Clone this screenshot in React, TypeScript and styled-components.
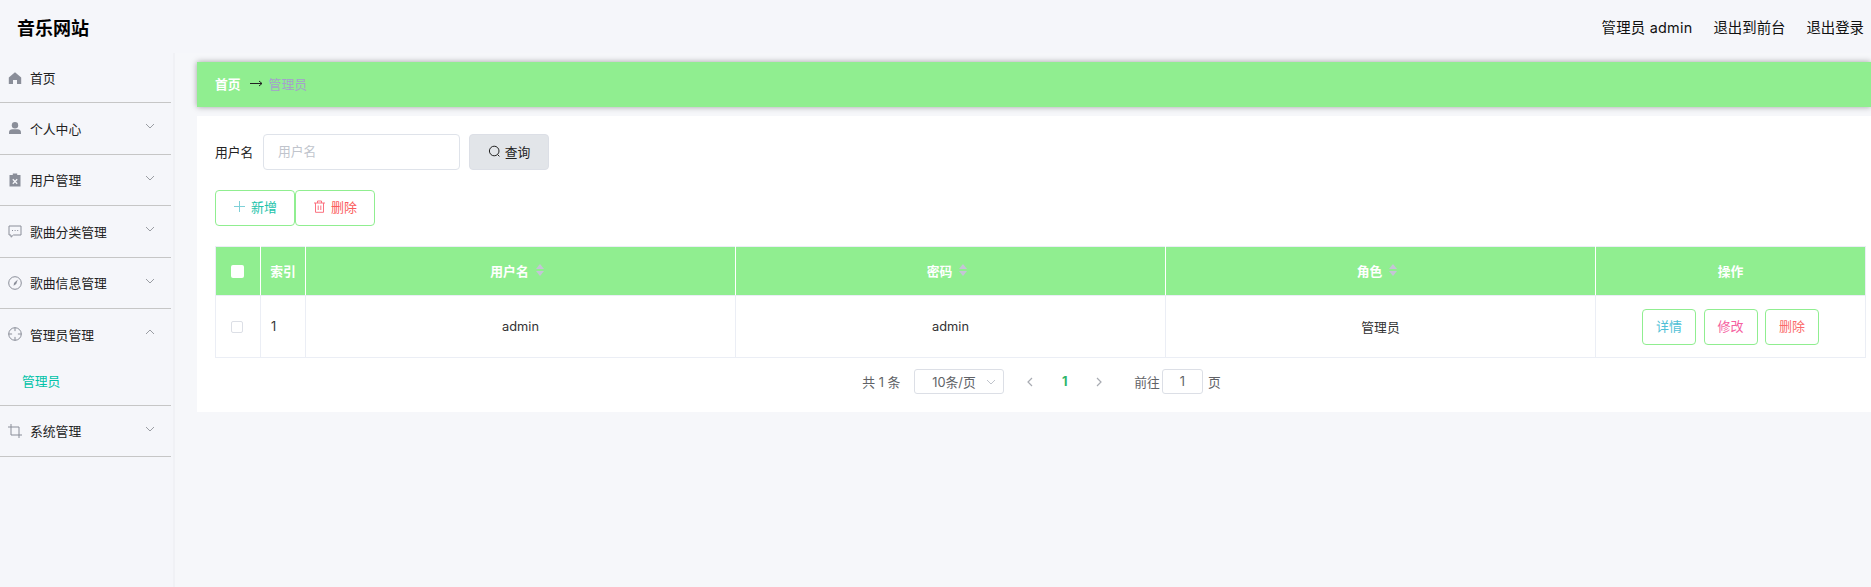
import React from "react";
import styled, { createGlobalStyle } from "styled-components";

const FONT = `Inter, "Noto Sans CJK SC", "Noto Sans", sans-serif`;

const Global = createGlobalStyle`
  html, body { margin: 0; padding: 0; height: 100%; overflow: hidden; background: #f6f7fa; }
  #root { height: 100%; }
  * { box-sizing: border-box; }
  body { font-family: ${FONT}; font-size: 12.8px; color: #303133; }
`;

const Page = styled.div`
  width: 1871px;
  height: 587px;
  display: flex;
  flex-direction: column;
  overflow: hidden;
`;
const TopBar = styled.header`
  height: 53px;
  flex: none;
  display: flex;
  align-items: center;
  justify-content: space-between;
  padding: 0 7px 0 17px;
  background: #f5f6fa;
`;
const Brand = styled.div`
  font-size: 18px;
  font-weight: 700;
  color: #000;
`;
const TopLinks = styled.nav`
  display: flex;
  gap: 21px;
  font-size: 14.4px;
  color: #111;
`;
const AdminName = styled.span`
  letter-spacing: 0.25px;
`;
const Body = styled.div`
  flex: 1;
  display: flex;
  min-height: 0;
`;
const Sidebar = styled.aside`
  width: 175px;
  flex: none;
  padding-right: 2px;
  background: #f5f6fa;
  border-right: 2px solid #f0f1f5;
`;
const MenuGroup = styled.div`
  border-bottom: 1px solid #c6c6c6;
`;
const MenuTitle = styled.div<{ $first?: boolean }>`
  height: ${(p) => (p.$first ? 49 : 50.5)}px;
  display: flex;
  align-items: center;
  padding-left: 8px;
  gap: 8px;
  color: #222;
`;
const MenuIcon = styled.svg`
  width: 14px;
  height: 14px;
  flex: none;
  color: #8a8e99;
`;
const MenuLabel = styled.span`
  flex: 1;
`;
const Chevron = styled.svg`
  width: 10px;
  height: 10px;
  margin-right: 16px;
  margin-top: -4px;
  color: #909399;
`;
const SubItem = styled.div`
  height: 45px;
  display: flex;
  align-items: flex-start;
  padding: 11px 0 0 22px;
  color: #00c2a8;
`;
const Main = styled.main`
  flex: 1;
  min-width: 0;
  padding: 9px 0 0 22px;
`;
const Crumbs = styled.div`
  height: 45px;
  display: flex;
  align-items: center;
  padding: 0 0 2px 18px;
  background: #90ee90;
  box-shadow: 0 0 6px rgba(0, 0, 0, 0.35);
`;
const CrumbHome = styled.span`
  color: #fff;
  font-weight: 700;
`;
const CrumbArrow = styled.span`
  width: 13px;
  height: 9px;
  margin: 0 6px 0 9px;
  color: #222;
  display: flex;
`;
const CrumbNow = styled.span`
  color: #a5a0cc;
`;
const Panel = styled.section`
  margin-top: 9px;
  height: 296px;
  background: #fff;
  padding: 18px 5px 0 18px;
`;
const FilterRow = styled.div`
  display: flex;
  align-items: center;
  height: 36px;
`;
const FieldLabel = styled.label`
  width: 48px;
  padding-bottom: 1px;
  color: #222;
`;
const TextInput = styled.input`
  width: 197px;
  height: 36px;
  border: 1px solid #dfe3ea;
  border-radius: 4px;
  padding: 0 14px 2px;
  font: inherit;
  background: #fff;
  &::placeholder {
    color: #c0c4cc;
  }
`;
const SearchButton = styled.button`
  margin-left: 9px;
  width: 80px;
  height: 36px;
  display: flex;
  align-items: center;
  justify-content: center;
  gap: 4px;
  padding: 0 0 2px;
  border: 1px solid #dcdfe6;
  border-radius: 4px;
  background: #e2e5e9;
  color: #222;
  font: inherit;
`;
const Toolbar = styled.div`
  display: flex;
  margin-top: 20px;
`;
const GreenButton = styled.button<{ $color: string; $w?: number }>`
  width: ${(p) => p.$w ?? 80}px;
  height: 36px;
  display: flex;
  align-items: center;
  justify-content: center;
  gap: 5px;
  padding: 0 0 3px;
  background: #fff;
  border: 1px solid #90ee90;
  border-radius: 4px;
  color: ${(p) => p.$color};
  font: inherit;
  font-size: 13px;
`;
const BtnIcon = styled.svg`
  width: 13px;
  height: 13px;
  flex: none;
`;
const Grid = styled.table`
  margin-top: 20px;
  width: 1651px;
  table-layout: fixed;
  border-collapse: collapse;
  border: 1px solid #ebeef5;
`;
const HeadCell = styled.th<{ $w?: number }>`
  width: ${(p) => (p.$w ? `${p.$w}px` : "auto")};
  height: 49px;
  padding: 0 0 2px;
  background: #90ee90;
  color: #fff;
  font-weight: 700;
  font-size: 12.8px;
  text-align: center;
  border-right: 1px solid #fff;
  border-bottom: 1px solid #ebeef5;
  &:last-child {
    border-right: 0;
  }
`;
const HeadInner = styled.span`
  display: inline-flex;
  align-items: center;
  gap: 7px;
  padding-right: 7px;
`;
const Sort = styled.span`
  display: inline-flex;
  flex-direction: column;
  gap: 2px;
`;
const Caret = styled.i<{ $up?: boolean }>`
  width: 0;
  height: 0;
  border-left: 4px solid transparent;
  border-right: 4px solid transparent;
  ${(p) => (p.$up ? "border-bottom: 5px solid #c4c4d6;" : "border-top: 5px solid #c4c4d6;")}
`;
const Cell = styled.td<{ $left?: boolean }>`
  height: 62px;
  padding: 0 0 0 ${(p) => (p.$left ? 10 : 0)}px;
  text-align: ${(p) => (p.$left ? "left" : "center")};
  border-right: 1px solid #ebeef5;
  color: #333;
`;
const HeadCheck = styled.span`
  display: block;
  width: 13px;
  height: 13px;
  margin: 2px 0 0 15px;
  background: #fff;
  border-radius: 2px;
`;
const RowCheck = styled.span`
  display: block;
  width: 12px;
  height: 12px;
  margin: 0 0 0 15px;
  background: #fff;
  border: 1px solid #dcdfe6;
  border-radius: 2px;
`;
const Actions = styled.div`
  display: flex;
  justify-content: center;
  gap: 7.6px;
`;
const Pager = styled.div`
  display: flex;
  align-items: center;
  justify-content: center;
  height: 25px;
  margin-top: 11px;
  padding-left: 2px;
  color: #606266;
`;
const PageSize = styled.div`
  width: 90px;
  height: 25px;
  margin: 0 0 0 14px;
  padding: 0 7px 0 17px;
  display: flex;
  align-items: center;
  justify-content: space-between;
  border: 1px solid #dcdfe6;
  border-radius: 3px;
`;
const PagerNav = styled.svg`
  width: 10px;
  height: 10px;
  color: #a8abb2;
`;
const PagerChevron = styled.svg`
  width: 10px;
  height: 10px;
  color: #c0c4cc;
`;
const PagerPrev = styled.span`
  margin-left: 21px;
  display: flex;
`;
const PagerCurrent = styled.span`
  width: 59px;
  text-align: center;
  font-weight: 700;
  color: #2fb56a;
`;
const PagerGoto = styled.span`
  margin-left: 30px;
`;
const PagerInput = styled.div`
  width: 41px;
  height: 25px;
  margin: 0 5px 0 2px;
  display: flex;
  align-items: center;
  justify-content: center;
  border: 1px solid #dcdfe6;
  border-radius: 3px;
`;

const Down = () => (
  <Chevron viewBox="0 0 10 10" fill="none" stroke="currentColor" strokeWidth="0.9">
    <path d="M1 3l4 4 4-4" />
  </Chevron>
);
const Up = () => (
  <Chevron viewBox="0 0 10 10" fill="none" stroke="currentColor" strokeWidth="0.9">
    <path d="M1 7l4-4 4 4" />
  </Chevron>
);

const IconHome = () => (
  <MenuIcon viewBox="0 0 14 14" fill="currentColor">
    <path d="M7 1.2 13.2 6.6V13H9V9H5V13H.8V6.6z" />
  </MenuIcon>
);
const IconUser = () => (
  <MenuIcon viewBox="0 0 14 14" fill="currentColor">
    <circle cx="7" cy="4.2" r="3.2" />
    <path d="M1 13v-1.6C1 9.4 2.6 8.2 4.4 8.2h5.2c1.8 0 3.4 1.2 3.4 3.2V13z" />
  </MenuIcon>
);
const IconClip = () => (
  <MenuIcon viewBox="0 0 14 14">
    <path fill="currentColor" d="M4.8.6h4.4V2h3.3v11.6h-11V2h3.3z" />
    <path fill="none" stroke="#f5f6fa" strokeWidth="1.3" d="M4.8 6.3l4.4 4.4M9.2 6.3l-4.4 4.4" />
  </MenuIcon>
);
const IconChat = () => (
  <MenuIcon viewBox="0 0 14 14" fill="none" stroke="currentColor" strokeWidth="1">
    <path d="M1 2h12v9H5.5L3 13.2V11H1z" />
    <path d="M4 6.5h1M6.6 6.5h1M9.2 6.5h1" strokeWidth="1.2" />
  </MenuIcon>
);
const IconCompass = () => (
  <MenuIcon viewBox="0 0 14 14" fill="none" stroke="currentColor" strokeWidth="1">
    <circle cx="7" cy="7" r="6.3" />
    <path fill="currentColor" stroke="none" d="M9.8 3.4 8.2 8 5.6 9.8 6 7z" />
  </MenuIcon>
);
const IconAim = () => (
  <MenuIcon viewBox="0 0 14 14" fill="none" stroke="currentColor" strokeWidth="1">
    <circle cx="7" cy="7" r="6.3" />
    <path d="M7 .7v3.4M7 9.9v3.4M.7 7h3.4M9.9 7h3.4" />
  </MenuIcon>
);
const IconCrop = () => (
  <MenuIcon viewBox="0 0 14 14" fill="none" stroke="currentColor" strokeWidth="1">
    <path d="M3 0v11h11M0 3h11v11" />
  </MenuIcon>
);

const SortCarets = () => (
  <Sort>
    <Caret $up />
    <Caret />
  </Sort>
);

export default function App() {
  return (
    <Page>
      <Global />
      <TopBar>
        <Brand>音乐网站</Brand>
        <TopLinks>
          <AdminName>管理员 admin</AdminName>
          <span>退出到前台</span>
          <span>退出登录</span>
        </TopLinks>
      </TopBar>
      <Body>
        <Sidebar>
          <MenuGroup>
            <MenuTitle $first>
              <IconHome />
              <MenuLabel>首页</MenuLabel>
            </MenuTitle>
          </MenuGroup>
          <MenuGroup>
            <MenuTitle>
              <IconUser />
              <MenuLabel>个人中心</MenuLabel>
              <Down />
            </MenuTitle>
          </MenuGroup>
          <MenuGroup>
            <MenuTitle>
              <IconClip />
              <MenuLabel>用户管理</MenuLabel>
              <Down />
            </MenuTitle>
          </MenuGroup>
          <MenuGroup>
            <MenuTitle>
              <IconChat />
              <MenuLabel>歌曲分类管理</MenuLabel>
              <Down />
            </MenuTitle>
          </MenuGroup>
          <MenuGroup>
            <MenuTitle>
              <IconCompass />
              <MenuLabel>歌曲信息管理</MenuLabel>
              <Down />
            </MenuTitle>
          </MenuGroup>
          <MenuGroup>
            <MenuTitle>
              <IconAim />
              <MenuLabel>管理员管理</MenuLabel>
              <Up />
            </MenuTitle>
            <SubItem>管理员</SubItem>
          </MenuGroup>
          <MenuGroup>
            <MenuTitle>
              <IconCrop />
              <MenuLabel>系统管理</MenuLabel>
              <Down />
            </MenuTitle>
          </MenuGroup>
        </Sidebar>
        <Main>
          <Crumbs>
            <CrumbHome>首页</CrumbHome>
            <CrumbArrow>
              <svg width="13" height="9" viewBox="0 0 13 9" fill="none" stroke="currentColor" strokeWidth="1">
                <path d="M0 4.5h12M9 2l3 2.5L9 7" />
              </svg>
            </CrumbArrow>
            <CrumbNow>管理员</CrumbNow>
          </Crumbs>
          <Panel>
            <FilterRow>
              <FieldLabel>用户名</FieldLabel>
              <TextInput placeholder="用户名" readOnly />
              <SearchButton>
                <BtnIcon viewBox="0 0 13 13" fill="none" stroke="#222" strokeWidth="1">
                  <circle cx="6.2" cy="6" r="4.8" />
                  <path d="M9.6 9.6l1.8 1.8" />
                </BtnIcon>
                查询
              </SearchButton>
            </FilterRow>
            <Toolbar>
              <GreenButton $color="#22c3aa">
                <BtnIcon viewBox="0 0 13 13" fill="none" stroke="#7fd0d8" strokeWidth="1">
                  <path d="M6.5 1v11M1 6.5h11" />
                </BtnIcon>
                新增
              </GreenButton>
              <GreenButton $color="#fb5c5c">
                <BtnIcon viewBox="0 0 13 13" fill="none" stroke="#fb7280" strokeWidth="1">
                  <path d="M1 3h11M4.5 3V1h4v2M2.5 3v9.3h8V3M5.2 5.5v4.5M7.8 5.5v4.5" />
                </BtnIcon>
                删除
              </GreenButton>
            </Toolbar>
            <Grid>
              <thead>
                <tr>
                  <HeadCell $w={45}>
                    <HeadCheck />
                  </HeadCell>
                  <HeadCell $w={45}>索引</HeadCell>
                  <HeadCell>
                    <HeadInner>
                      用户名
                      <SortCarets />
                    </HeadInner>
                  </HeadCell>
                  <HeadCell>
                    <HeadInner>
                      密码
                      <SortCarets />
                    </HeadInner>
                  </HeadCell>
                  <HeadCell>
                    <HeadInner>
                      角色
                      <SortCarets />
                    </HeadInner>
                  </HeadCell>
                  <HeadCell $w={270}>操作</HeadCell>
                </tr>
              </thead>
              <tbody>
                <tr>
                  <Cell>
                    <RowCheck />
                  </Cell>
                  <Cell $left>1</Cell>
                  <Cell>admin</Cell>
                  <Cell>admin</Cell>
                  <Cell>管理员</Cell>
                  <Cell>
                    <Actions>
                      <GreenButton $color="#4fbfd6" $w={54}>详情</GreenButton>
                      <GreenButton $color="#f5609f" $w={54}>修改</GreenButton>
                      <GreenButton $color="#fb6a6a" $w={54}>删除</GreenButton>
                    </Actions>
                  </Cell>
                </tr>
              </tbody>
            </Grid>
            <Pager>
              <span>共 1 条</span>
              <PageSize>
                <span>10条/页</span>
                <PagerChevron viewBox="0 0 10 10" fill="none" stroke="currentColor" strokeWidth="1">
                  <path d="M1 3l4 4 4-4" />
                </PagerChevron>
              </PageSize>
              <PagerPrev>
                <PagerNav viewBox="0 0 10 10" fill="none" stroke="currentColor" strokeWidth="1.2">
                  <path d="M7 1 3 5l4 4" />
                </PagerNav>
              </PagerPrev>
              <PagerCurrent>1</PagerCurrent>
              <PagerNav viewBox="0 0 10 10" fill="none" stroke="currentColor" strokeWidth="1.2">
                <path d="M3 1l4 4-4 4" />
              </PagerNav>
              <PagerGoto>前往</PagerGoto>
              <PagerInput>1</PagerInput>
              <span>页</span>
            </Pager>
          </Panel>
        </Main>
      </Body>
    </Page>
  );
}
